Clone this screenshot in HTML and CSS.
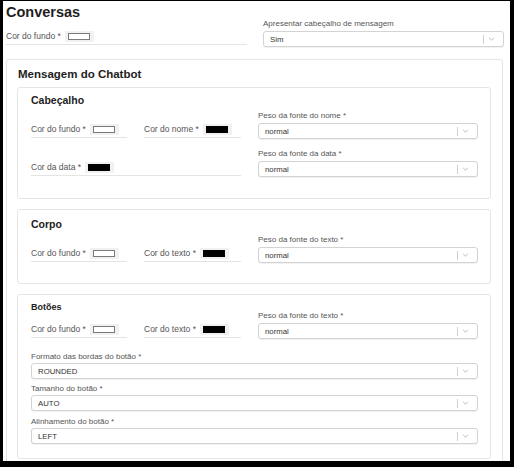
FILE: index.html
```html
<!DOCTYPE html>
<html lang="pt-BR">
<head>
    <meta charset="UTF-8">
    <meta name="viewport" content="width=device-width, initial-scale=1.0">
    <title>Conversas</title>
    <link rel="stylesheet" href="styles.css">
</head>
<body>
<div class="screen">
    <div class="top-row">
        <div class="top-left">
            <h1 class="page-title">Conversas</h1>
            <div class="color-field top-color">
                <span class="color-label">Cor do fundo *</span>
                <span class="swatch"><span class="chip"></span></span>
            </div>
        </div>
        <div class="field top-right">
            <div class="field-label">Apresentar cabeçalho de mensagem</div>
            <div class="select">
                <span class="select-value">Sim</span>
                <span class="select-indicators"><span class="select-sep"></span><svg class="chevron" viewBox="0 0 8 5"><path d="M1 1l3 3 3-3"/></svg></span>
            </div>
        </div>
    </div>

    <section class="card outer-card">
        <h2 class="section-title">Mensagem do Chatbot</h2>

        <section class="card sub-card header-card">
            <h3 class="card-title">Cabeçalho</h3>
            <div class="form-row">
                <div class="color-field">
                    <span class="color-label">Cor do fundo *</span>
                    <span class="swatch"><span class="chip"></span></span>
                </div>
                <div class="color-field">
                    <span class="color-label">Cor do nome *</span>
                    <span class="swatch"><span class="chip dark"></span></span>
                </div>
                <div class="field">
                    <div class="field-label">Peso da fonte do nome *</div>
                    <div class="select">
                        <span class="select-value">normal</span>
                        <span class="select-indicators"><span class="select-sep"></span><svg class="chevron" viewBox="0 0 8 5"><path d="M1 1l3 3 3-3"/></svg></span>
                    </div>
                </div>
            </div>
            <div class="form-row second-row">
                <div class="color-field span-two">
                    <span class="color-label">Cor da data *</span>
                    <span class="swatch"><span class="chip dark"></span></span>
                </div>
                <div class="field">
                    <div class="field-label">Peso da fonte da data *</div>
                    <div class="select">
                        <span class="select-value">normal</span>
                        <span class="select-indicators"><span class="select-sep"></span><svg class="chevron" viewBox="0 0 8 5"><path d="M1 1l3 3 3-3"/></svg></span>
                    </div>
                </div>
            </div>
        </section>

        <section class="card sub-card body-card">
            <h3 class="card-title">Corpo</h3>
            <div class="form-row">
                <div class="color-field">
                    <span class="color-label">Cor do fundo *</span>
                    <span class="swatch"><span class="chip"></span></span>
                </div>
                <div class="color-field">
                    <span class="color-label">Cor do texto *</span>
                    <span class="swatch"><span class="chip dark"></span></span>
                </div>
                <div class="field">
                    <div class="field-label">Peso da fonte do texto *</div>
                    <div class="select">
                        <span class="select-value">normal</span>
                        <span class="select-indicators"><span class="select-sep"></span><svg class="chevron" viewBox="0 0 8 5"><path d="M1 1l3 3 3-3"/></svg></span>
                    </div>
                </div>
            </div>
        </section>

        <section class="card sub-card buttons-card">
            <h3 class="card-title small">Botões</h3>
            <div class="form-row">
                <div class="color-field">
                    <span class="color-label">Cor do fundo *</span>
                    <span class="swatch"><span class="chip"></span></span>
                </div>
                <div class="color-field">
                    <span class="color-label">Cor do texto *</span>
                    <span class="swatch"><span class="chip dark"></span></span>
                </div>
                <div class="field">
                    <div class="field-label">Peso da fonte do texto *</div>
                    <div class="select">
                        <span class="select-value">normal</span>
                        <span class="select-indicators"><span class="select-sep"></span><svg class="chevron" viewBox="0 0 8 5"><path d="M1 1l3 3 3-3"/></svg></span>
                    </div>
                </div>
            </div>
            <div class="field full-field first-full">
                <div class="field-label">Formato das bordas do botão *</div>
                <div class="select">
                    <span class="select-value">ROUNDED</span>
                    <span class="select-indicators"><span class="select-sep"></span><svg class="chevron" viewBox="0 0 8 5"><path d="M1 1l3 3 3-3"/></svg></span>
                </div>
            </div>
            <div class="field full-field">
                <div class="field-label">Tamanho do botão *</div>
                <div class="select">
                    <span class="select-value">AUTO</span>
                    <span class="select-indicators"><span class="select-sep"></span><svg class="chevron" viewBox="0 0 8 5"><path d="M1 1l3 3 3-3"/></svg></span>
                </div>
            </div>
            <div class="field full-field last-full">
                <div class="field-label">Alinhamento do botão *</div>
                <div class="select">
                    <span class="select-value">LEFT</span>
                    <span class="select-indicators"><span class="select-sep"></span><svg class="chevron" viewBox="0 0 8 5"><path d="M1 1l3 3 3-3"/></svg></span>
                </div>
            </div>
        </section>
    </section>
</div>
</body>
</html>
```

FILE: styles.css
```css
*
{
    box-sizing: border-box;
}

html, body
{
    margin: 0;
    background-color: #000;
}

body
{
    font-family: "Liberation Sans", Arial, sans-serif;
    color: #333;
}

/* white page inside the dark frame */
.screen
{
    margin: 1px 4px 0 3px;
    height: 460px;
    overflow: hidden;
    background-color: #fff;
    padding: 0 6px 0 3px;
}

.top-row
{
    display: grid;
    grid-template-columns: 241px 241px;
    column-gap: 16px;
}

.page-title
{
    margin: 0;
    padding-top: 2px;
    font-size: 14.5px;
    line-height: 18px;
    font-weight: bold;
    color: #1e1e1e;
}

.top-color
{
    margin-top: 9px;
}

.top-right
{
    padding-top: 18px;
}

/* cards */
.card
{
    background-color: #fff;
    border: 1px solid #e6e6e6;
    border-radius: 3px;
}

.outer-card
{
    margin: 12px 1px 0 0;
    padding: 7px 11px 20px 10px;
    box-shadow: 0 0 2px rgba(0, 0, 0, 0.04);
}

.section-title
{
    margin: 0 0 6px 1px;
    font-size: 11.5px;
    line-height: 14px;
    font-weight: bold;
    color: #222;
}

.sub-card
{
    padding: 6px 12px 21px 13px;
    margin-bottom: 10px;
}

.card-title
{
    margin: 0 0 4px 0;
    font-size: 10.5px;
    line-height: 13px;
    font-weight: bold;
    color: #222;
}

.body-card
{
    padding-bottom: 20px;
}

.body-card .card-title
{
    margin-top: 2px;
    margin-bottom: 4px;
}

.card-title.small
{
    font-size: 9px;
    line-height: 12px;
    margin-bottom: -2px;
}

.buttons-card
{
    padding-bottom: 14px;
}

/* form rows: two colour pickers and a select */
.form-row
{
    display: grid;
    grid-template-columns: 96px 97px 1fr;
    column-gap: 17px;
    align-items: end;
}

.second-row
{
    margin-top: 10px;
}

.span-two
{
    grid-column: span 2;
}

.color-field
{
    display: flex;
    align-items: center;
    height: 15px;
    padding-bottom: 2px;
    margin-bottom: 1px;
    border-bottom: 1px solid #e4e4e4;
}

.color-label
{
    font-size: 8.5px;
    color: #555;
    white-space: nowrap;
}

.swatch
{
    display: inline-flex;
    margin-left: 4px;
    padding: 2px 4px 2px 3px;
    background-color: #f1f1f1;
}

.chip
{
    width: 22px;
    height: 7px;
    border: 1px solid #7a7a7a;
    background-color: #fff;
}

.chip.dark
{
    background-color: #000;
    border-color: #000;
}

.field-label
{
    font-size: 8px;
    line-height: 10px;
    margin-bottom: 2px;
    color: #555;
    white-space: nowrap;
}

.full-field .field-label
{
    margin-bottom: 1px;
}

.first-full
{
    margin-top: 13px;
}

.full-field + .full-field
{
    margin-top: 5px;
}

.last-full
{
    margin-top: 6px !important;
}

/* select box */
.select
{
    display: flex;
    align-items: center;
    height: 16px;
    padding-left: 6px;
    border: 1px solid #d3d3d3;
    border-radius: 3px;
    background-color: #fff;
    box-shadow: 0 1px 1px rgba(0, 0, 0, 0.06);
}

.select-value
{
    flex: 1;
    font-size: 7.8px;
    color: #333;
}

.select-indicators
{
    display: flex;
    align-items: center;
    gap: 4px;
    padding-right: 8px;
}

.select-sep
{
    width: 1px;
    height: 9px;
    background-color: #cfcfcf;
}

.chevron
{
    width: 7px;
    height: 4px;
    fill: none;
    stroke: #aaa;
    stroke-width: 1;
}
```
